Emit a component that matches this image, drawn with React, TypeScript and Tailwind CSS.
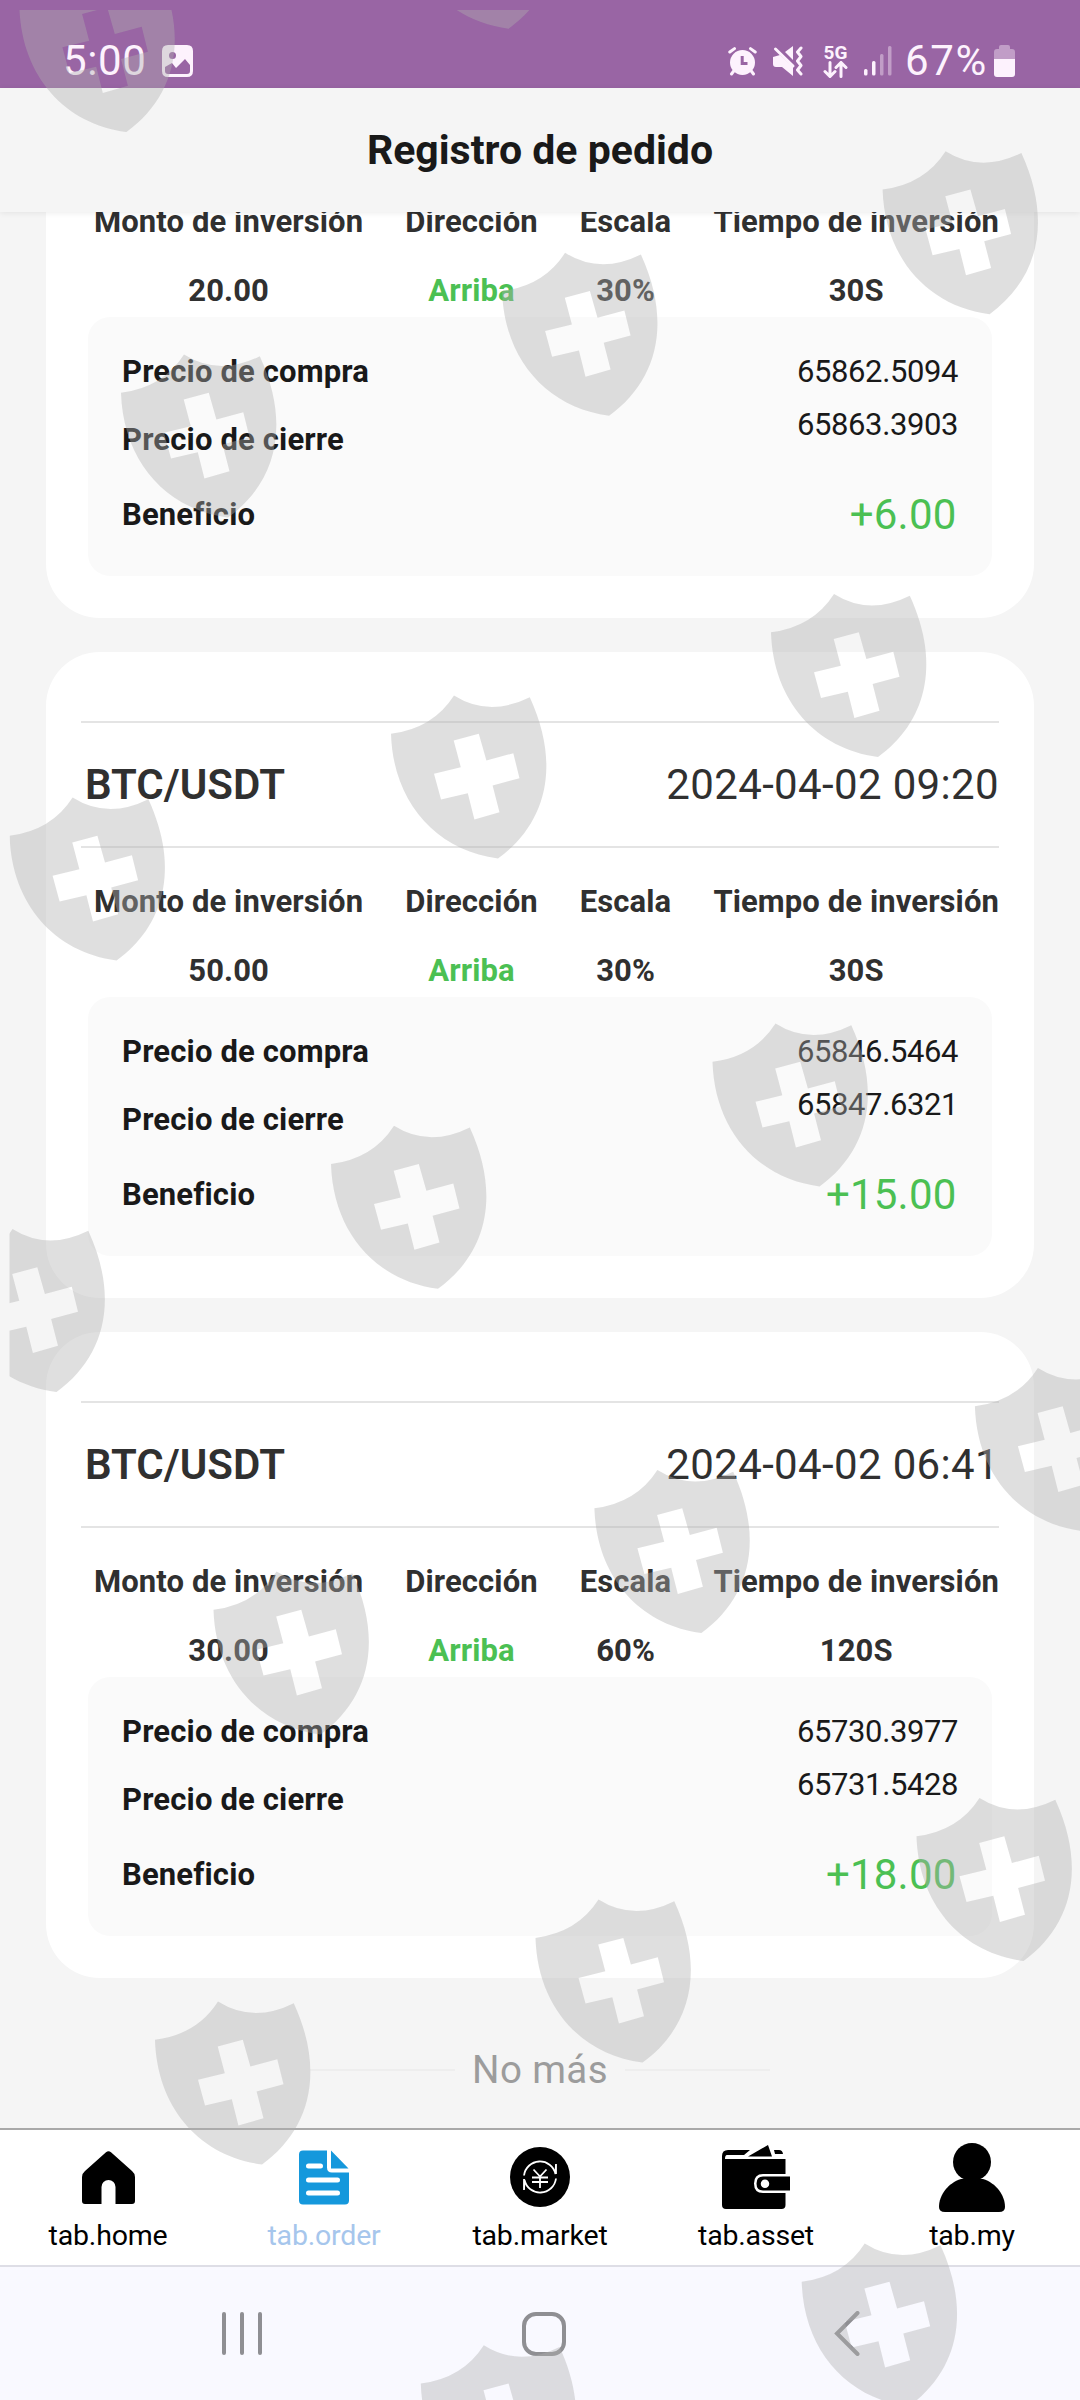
import type { ReactNode } from "react";

type Order = {
  pair?: string;
  date?: string;
  amount: string;
  direction: string;
  scale: string;
  duration: string;
  buyPrice: string;
  closePrice: string;
  profit: string;
};

const orders: Order[] = [
  {
    amount: "20.00",
    direction: "Arriba",
    scale: "30%",
    duration: "30S",
    buyPrice: "65862.5094",
    closePrice: "65863.3903",
    profit: "+6.00",
  },
  {
    pair: "BTC/USDT",
    date: "2024-04-02 09:20",
    amount: "50.00",
    direction: "Arriba",
    scale: "30%",
    duration: "30S",
    buyPrice: "65846.5464",
    closePrice: "65847.6321",
    profit: "+15.00",
  },
  {
    pair: "BTC/USDT",
    date: "2024-04-02 06:41",
    amount: "30.00",
    direction: "Arriba",
    scale: "60%",
    duration: "120S",
    buyPrice: "65730.3977",
    closePrice: "65731.5428",
    profit: "+18.00",
  },
];

// top-left corner of every shield in the overlay
const shields = [
  [19.4, -31],
  [401.6, -134.3],
  [882.6, 151.2],
  [502.1, 252.8],
  [121, 354.5],
  [771, 594],
  [391, 695.5],
  [9.6, 797.5],
  [712.5, 1023.5],
  [331, 1125.8],
  [-50.5, 1229],
  [974.9, 1368],
  [594.4, 1470],
  [213.5, 1571.5],
  [916.5, 1798],
  [535.5, 1899.6],
  [155, 2001.5],
  [801.7, 2243.5],
  [420.8, 2345.3],
];

function StatusBar() {
  return (
    <div className="flex h-[88px] shrink-0 items-center bg-[#9965a4] pt-[34px] text-[#fdf2fd]">
      <span className="ml-[63px] w-[99px] text-[42px] leading-[40px] tracking-[0.6px]">5:00</span>
      <svg className="h-8 w-[31px]" viewBox="0 0 31 32">
        <path
          fill="currentColor"
          fillRule="evenodd"
          d="M6 0H25Q31 0 31 6V26Q31 32 25 32H6Q0 32 0 26V6Q0 0 6 0ZM10.500 7A3.500 3.500 0 1 0 10.500 14A3.500 3.500 0 1 0 10.500 7ZM3 22V26Q3 29 6 29H25Q28 29 28 26V20L23 14L14 23L10 18Z"
        />
      </svg>

      <svg className="ml-[535px] h-[29px] w-[29px]" viewBox="0 0 29 29">
        <g stroke="currentColor" strokeWidth="3" strokeLinecap="round">
          <path d="M1.800 5L6.500 1.600M27.200 5L22.500 1.600M6.500 23L3.500 27M22.500 23L25.500 27" />
        </g>
        <circle cx="14.500" cy="15.500" r="12.500" fill="currentColor" />
        <path d="M14.200 9V16.500H19.500" fill="none" stroke="#9965a4" strokeWidth="3" />
      </svg>
      <svg className="ml-4 h-[30px] w-[30px]" viewBox="0 0 30 30" fill="none">
        <path fill="currentColor" d="M0 11L7 9L20 21V30L9 21H3Q0 21 0 18ZM12 6L20 0V14Z" />
        <path stroke="currentColor" strokeWidth="3" strokeLinecap="round" d="M2.500 3L20 20" />
        <path
          stroke="currentColor"
          strokeWidth="3"
          strokeLinecap="round"
          strokeLinejoin="round"
          d="M28 2L24.500 6L28 10.500L24.500 15L28 19.500L24.500 24L28 28"
        />
      </svg>
      <div className="ml-[19px] flex w-[27px] flex-col items-center">
        <span className="text-[19px] leading-[16px] font-bold">5G</span>
        <svg className="h-[17px] w-[25px]" viewBox="0 0 25 17" fill="none">
          <path
            stroke="currentColor"
            strokeWidth="3"
            strokeLinecap="round"
            d="M7 1.500V15M2 10.500L7 15.500L12 10.500M18 15.500V2M13 6.500L18 1.500L23 6.500"
          />
        </svg>
      </div>
      <svg className="ml-[15px] h-[30px] w-[28px]" viewBox="0 0 28 30" fill="currentColor">
        <rect x="0" y="23" width="3.500" height="6.500" rx="1.500" />
        <rect x="8" y="15" width="3.500" height="14.500" rx="1.500" />
        <rect x="16" y="8" width="3.500" height="21.500" rx="1.500" opacity=".4" />
        <rect x="24" y="0" width="3.500" height="29.500" rx="1.500" opacity=".4" />
      </svg>
      <span className="ml-[13px] w-[84px] text-[42px] leading-[40px] tracking-[1.6px]">67%</span>
      <svg className="ml-[5px] h-8 w-[21px]" viewBox="0 0 21 32" fill="currentColor">
        <path opacity=".4" d="M0 14V7Q0 4 3 4H5V2Q5 0 7 0H14Q16 0 16 2V4H18Q21 4 21 7V14Z" />
        <path d="M0 14H21V29Q21 32 18 32H3Q0 32 0 29Z" />
      </svg>
    </div>
  );
}

function Column({ label, value, green }: { label: string; value: string; green?: boolean }) {
  return (
    <div className="flex flex-col items-center gap-[29px] text-[31px] leading-10 font-bold tracking-[0.1px] whitespace-nowrap text-[#303030]">
      <span>{label}</span>
      <span className={green ? "text-[#4bc053]" : ""}>{value}</span>
    </div>
  );
}

function OrderCard({ order }: { order: Order }) {
  return (
    <article className="h-[646px] rounded-[54px] bg-white pt-[69px]">
      <div className="mx-[35px] flex h-[127px] items-center justify-between border-y-2 border-[#e4e4e4] pl-1 text-[42px] text-[#303030]">
        <span className="font-semibold">{order.pair}</span>
        <span className="tracking-[0.35px]">{order.date}</span>
      </div>

      <div className="mt-[34px] mr-[35px] ml-[48px] flex justify-between">
        <Column label="Monto de inversión" value={order.amount} />
        <Column label="Dirección" value={order.direction} green />
        <Column label="Escala" value={order.scale} />
        <Column label="Tiempo de inversión" value={order.duration} />
      </div>

      <div className="mx-[42px] mt-[6px] flex h-[259px] justify-between rounded-[22px] bg-[#fafafa] pt-[35px] pr-[34px] pl-[34px] text-[31px] leading-10 text-[#191919]">
        <div className="flex flex-col font-bold tracking-[0.15px]">
          <span>Precio de compra</span>
          <span className="mt-[28px]">Precio de cierre</span>
          <span className="mt-[35px]">Beneficio</span>
        </div>
        <div className="flex flex-col items-end">
          <span className="tracking-[-0.4px]">{order.buyPrice}</span>
          <span className="mt-[13px] tracking-[-0.4px]">{order.closePrice}</span>
          <span className="mt-[50px] mr-[1.500px] text-[42px] tracking-[0.2px] text-[#4bc053]">
            {order.profit}
          </span>
        </div>
      </div>
    </article>
  );
}

function Tab({ label, active, children }: { label: string; active?: boolean; children: ReactNode }) {
  return (
    <div className="flex w-[216px] flex-col items-center">
      <div className="flex h-[94px] items-center">{children}</div>
      <span
        className={`mt-px text-[28.500px] leading-[22px] tracking-[-0.2px] ${active ? "text-[#a6c6ec]" : "text-black"}`}
      >
        {label}
      </span>
    </div>
  );
}

function TabBar() {
  return (
    <nav className="flex h-[139px] shrink-0 border-t-2 border-b-2 border-t-[#a9a9a9] border-b-[#dedee6] bg-white">
      <Tab label="tab.home">
        <svg className="h-[53px] w-[53px]" viewBox="0 0 53 53">
          <path d="M24 1.200Q26.500-.8 29 1.200L50 20Q53 22.500 53 26V50Q53 53 50 53H33.500V36A7 7 0 0 0 19.500 36V53H3Q0 53 0 50V26Q0 22.500 3 20Z" />
        </svg>
      </Tab>
      <Tab label="tab.order" active>
        <svg className="h-[55px] w-[50px]" viewBox="0 0 50 54">
          <path
            fill="#1598dc"
            d="M4 0H28V17Q28 22 33 22H50V50Q50 54 46 54H4Q0 54 0 50V4Q0 0 4 0ZM32 0L49.500 18H32Z"
          />
          <path
            stroke="#fff"
            strokeWidth="5"
            strokeLinecap="round"
            d="M9.500 15.500H21.500M9.500 29.500H38.500M9.500 42.500H38.500"
          />
        </svg>
      </Tab>
      <Tab label="tab.market">
        <svg className="h-[60px] w-[60px]" viewBox="0 0 60 60" fill="none">
          <circle cx="30" cy="30" r="30" fill="#000" />
          <g stroke="#fff" strokeWidth="1.800">
            <path d="M14 28.500A16 16 0 0 1 45.500 27L46 17V27M46 31.500A16 16 0 0 1 14.500 33L14 43V32" />
            <path d="M23.500 22.500L30 29.500L36.500 22.500M30 29V41M22 30.500H38M22 35H38" />
          </g>
        </svg>
      </Tab>
      <Tab label="tab.asset">
        <svg className="h-16 w-[68px]" viewBox="0 0 68 64">
          <path d="M6 5H28L22 10H5Q3 10 3 14H63.500V29H41Q32 29 32 38.500Q32 48 41 48H63.500V60Q63.500 64 59.500 64H4Q0 64 0 60V11Q0 5 6 5ZM26 11.500L46 0L50 11.500ZM52 5H57Q60.500 5 61 9H53Z" />
          <path
            fillRule="evenodd"
            d="M68 31.500H41Q34.500 31.500 34.500 38.500Q34.500 45.500 41 45.500H68ZM43 34.500A4.200 4.200 0 1 1 43 43A4.200 4.200 0 1 1 43 34.500Z"
          />
        </svg>
      </Tab>
      <Tab label="tab.my">
        <svg className="h-[69px] w-[66px]" viewBox="0 0 66 69">
          <circle cx="33" cy="19" r="19" />
          <path d="M22 36H44C57 40 66 52 66 64Q66 69 60 69H6Q0 69 0 64C0 52 9 40 22 36Z" />
        </svg>
      </Tab>
    </nav>
  );
}

function SystemNav() {
  return (
    <div className="flex h-[133px] shrink-0 items-center bg-[#f9f9ff]">
      <svg className="ml-[222px] h-[43px] w-10" viewBox="0 0 40 43">
        <path
          stroke="#8f8f93"
          strokeWidth="4"
          strokeLinecap="round"
          d="M2 2V41M20 2V41M38 2V41"
        />
      </svg>
      <div className="ml-[260px] h-[44px] w-[44px] rounded-[14px] border-4 border-[#8f8f93]" />
      <svg className="ml-[268px] h-[45px] w-[26px]" viewBox="0 0 26 45" fill="none">
        <path stroke="#8f8f93" strokeWidth="4" strokeLinecap="round" d="M23.500 2L3 22.500L23.500 43" />
      </svg>
    </div>
  );
}

function ShieldOverlay() {
  return (
    <svg
      className="pointer-events-none absolute inset-0 z-20 h-[2400px] w-[1080px]"
      viewBox="0 0 1080 2400"
    >
      <defs>
        <clipPath id="area">
          <rect x="9.500" y="10" width="1071" height="2390" />
        </clipPath>
        <path
          id="shield"
          fillRule="evenodd"
          d="M0 38.300Q42 33 63 0Q98 22 138.800 1.700C171 72 154 129 107 163C45 155 2 106.500 0 38.300ZM62.700 45L87.800 38.300L95.400 65L122.300 57.700L128.500 82.700L101.600 90L108.500 116.700L83.400 124L76.800 97.700L50 104L43 78.300L69.800 71.700Z"
        />
      </defs>
      <g clipPath="url(#area)" fill="#afafaf" fillOpacity=".4">
        {shields.map(([x, y]) => (
          <use key={`${x}-${y}`} href="#shield" x={x} y={y} />
        ))}
      </g>
    </svg>
  );
}

export default function App() {
  return (
    <div className="relative flex h-[2400px] w-[1080px] flex-col overflow-hidden bg-[#f5f5f5] font-['Roboto',sans-serif]">
      <StatusBar />
      <header className="z-10 flex h-[124px] shrink-0 items-center justify-center bg-[#f5f5f5] shadow-[0_1px_6px_rgba(0,0,0,0.08)]">
        <h1 className="text-[41px] leading-[48px] font-bold text-[#191919]">Registro de pedido</h1>
      </header>

      <main className="flex h-[1916px] shrink-0 flex-col overflow-hidden px-[46px]">
        <div className="-mt-[240px] flex flex-col gap-[34px]">
          {orders.map((order) => (
            <OrderCard key={order.buyPrice} order={order} />
          ))}
        </div>
        <div className="mt-[69px] flex items-center justify-center gap-[17px] text-[38.500px] leading-[46px] tracking-[0.4px] text-[#9c9c9c]">
          <span className="h-[2px] w-[145px] bg-[#eeeeee]" />
          <span>No más</span>
          <span className="h-[2px] w-[145px] bg-[#eeeeee]" />
        </div>
      </main>

      <TabBar />
      <SystemNav />
      <ShieldOverlay />
    </div>
  );
}
